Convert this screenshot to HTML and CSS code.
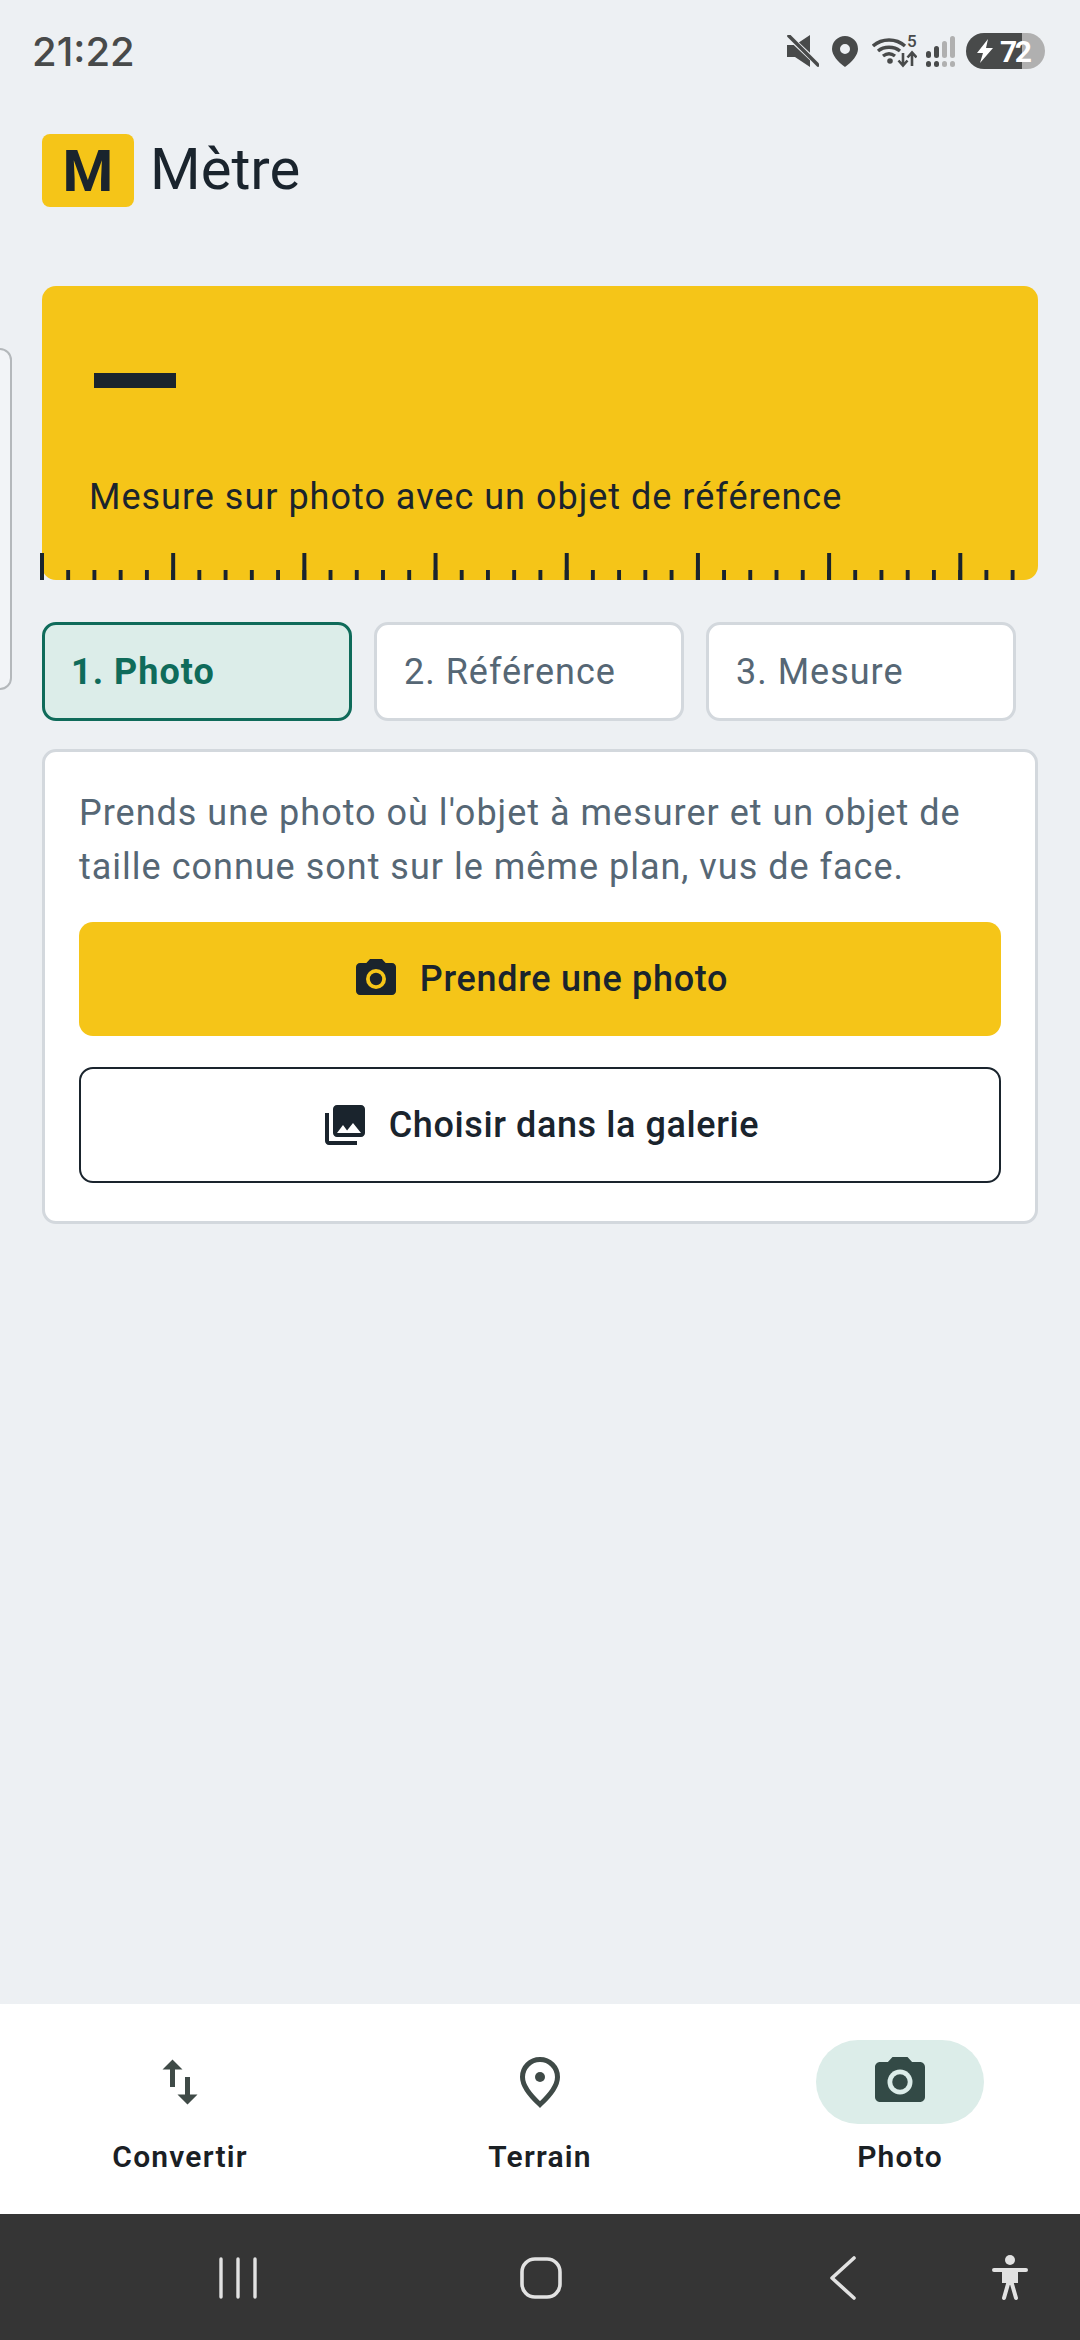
FILE: index.html
```html
<!DOCTYPE html>
<html lang="fr">
<head>
<meta charset="utf-8">
<title>Mètre</title>
<link rel="stylesheet" href="styles.css">
</head>
<body>
<div class="screen">
  <div class="status">
    <span class="time">21:22</span>
    <div class="status-icons">
      <svg class="si-mute" viewBox="0 0 32 32"><path d="M0 10h8L23 0v32L8 22H0z" fill="#484a4a"/><path d="M0 0l32 30" stroke="#edf0f3" stroke-width="5.500"/><path d="M2 1l29 29" stroke="#484a4a" stroke-width="3.600" stroke-linecap="round"/></svg>
      <svg class="si-pin" viewBox="0 0 26 31"><path fill-rule="evenodd" d="M13 0a13 13 0 0 1 13 13c0 6-6 13-13 18C6 26 0 19 0 13A13 13 0 0 1 13 0zm0 8a5 5 0 1 0 0 10a5 5 0 0 0 0-10z" fill="#484a4a"/></svg>
      <svg class="si-wifi" viewBox="0 -5 45 41"><g fill="none" stroke="#484a4a" stroke-width="3.400"><path d="M1 10c9-8 23-8 32 0"/><path d="M6 15c6-5 16-5 22 0"/><path d="M11 20c4-3 8-3 12 0"/></g><circle cx="18" cy="25" r="2.800" fill="#484a4a"/><text x="35" y="11" class="wifi-5">5</text><path d="M31 17v12m-4.500-4.500l4.500 5 4.500-5M40 30V17m-4.500 4.500l4.500-5 4.500 5" fill="none" stroke="#484a4a" stroke-width="2.600"/></svg>
      <svg class="si-sig" viewBox="0 0 29 31"><g fill="#484a4a"><rect x="0" y="15" width="5" height="7" rx="2.500"/><rect x="8" y="10" width="5" height="12" rx="2.500"/><rect x="0" y="25" width="5" height="6" rx="2.500"/><rect x="8" y="25" width="5" height="6" rx="2.500"/></g><g fill="#b0b0b0"><rect x="16" y="5" width="5" height="17" rx="2.500"/><rect x="24" y="0" width="5" height="22" rx="2.500"/><rect x="16" y="25" width="5" height="6" rx="2.500"/><rect x="24" y="25" width="5" height="6" rx="2.500"/></g></svg>
      <div class="battery"><svg class="bolt" viewBox="0 0 16 24"><path d="M11 0L0 14h6l-3 10L16 9H9z" fill="#fff"/></svg><span class="batt-num">72</span></div>
    </div>
  </div>

  <header class="appbar">
    <div class="logo">M</div>
    <h1 class="title">Mètre</h1>
  </header>

  <main class="content">
    <div class="side-sheet"></div>
    <section class="hero">
      <div class="dash"></div>
      <p class="hero-text">Mesure sur photo avec un objet de référence</p>
      <div class="ticks"></div>
    </section>

    <div class="steps">
      <div class="step active">1. Photo</div>
      <div class="step">2. Référence</div>
      <div class="step">3. Mesure</div>
    </div>

    <section class="card">
      <p class="card-text">Prends une photo où l'objet à mesurer et un objet de taille connue sont sur le même plan, vus de face.</p>
      <button class="btn primary">
        <svg class="btn-icon" viewBox="0 0 24 24"><path fill-rule="evenodd" d="M9 2L7.170 4H4C2.900 4 2 4.900 2 6v12c0 1.100.9 2 2 2h16c1.100 0 2-.9 2-2V6c0-1.100-.9-2-2-2h-3.170L15 2H9z" fill="#1a242d"/><circle cx="12" cy="12" r="5" fill="#f5c518"/><circle cx="12" cy="12" r="3.100" fill="#1a242d"/></svg>
        <span class="t1">Prendre une photo</span>
      </button>
      <button class="btn outline">
        <svg class="btn-icon" viewBox="0 0 24 24"><path fill="#1a242d" d="M22 16V4c0-1.100-.9-2-2-2H8c-1.100 0-2 .9-2 2v12c0 1.100.9 2 2 2h12c1.100 0 2-.9 2-2zm-11-4l2.030 2.710L16 11l4 5H8l3-4zM2 6v14c0 1.100.9 2 2 2h14v-2H4V6H2z"/></svg>
        <span class="t2">Choisir dans la galerie</span>
      </button>
    </section>
  </main>

  <nav class="tabbar">
    <div class="tab">
      <div class="tab-pill"><svg class="tab-icon" viewBox="0 0 24 24"><path fill="#3f4a47" d="M16 17.010V10h-2v7.010h-3L15 21l4-3.990h-3zM9 3L5 6.990h3V14h2V6.990h3L9 3z"/></svg></div>
      <span class="tab-label">Convertir</span>
    </div>
    <div class="tab">
      <div class="tab-pill"><svg class="tab-icon" viewBox="0 0 24 24"><path fill="none" stroke="#3f4a47" stroke-width="2" d="M12 3a7 7 0 0 1 7 7c0 4-3.500 7.800-7 11-3.500-3.200-7-7-7-11a7 7 0 0 1 7-7z"/><circle cx="12" cy="10" r="2" fill="#3f4a47"/></svg></div>
      <span class="tab-label">Terrain</span>
    </div>
    <div class="tab">
      <div class="tab-pill on"><svg class="tab-icon" viewBox="0 0 24 24"><path d="M9 2L7.170 4H4C2.900 4 2 4.900 2 6v12c0 1.100.9 2 2 2h16c1.100 0 2-.9 2-2V6c0-1.100-.9-2-2-2h-3.170L15 2H9z" fill="#334a46"/><circle cx="12" cy="12" r="5" fill="#dcede9"/><circle cx="12" cy="12" r="3.100" fill="#334a46"/></svg></div>
      <span class="tab-label">Photo</span>
    </div>
  </nav>

  <div class="sysnav">
    <svg class="sn sn-recent" viewBox="0 0 40 42"><path d="M3 2v38M20 2v38M37 2v38" stroke="#e2e2e2" stroke-width="3.400" stroke-linecap="round"/></svg>
    <svg class="sn sn-home" viewBox="0 0 42 42"><rect x="2" y="2" width="38" height="38" rx="13" fill="none" stroke="#e2e2e2" stroke-width="3.600"/></svg>
    <svg class="sn sn-back" viewBox="0 0 28 44"><path d="M25 2L3 22l22 20" fill="none" stroke="#e2e2e2" stroke-width="3.600" stroke-linecap="round" stroke-linejoin="round"/></svg>
    <svg class="sn sn-a11y" viewBox="0 0 36 46"><circle cx="18" cy="5" r="5" fill="#e2e2e2"/><path d="M2 15h32M18 15v9M18 22l-6 21M18 22l6 21M12 16h12v10H12z" stroke="#e2e2e2" stroke-width="4" stroke-linecap="round" fill="#e2e2e2"/></svg>
  </div>
</div>
</body>
</html>
```
FILE: styles.css
```css
* { box-sizing: border-box; }
html, body { margin: 0; padding: 0; }
body { width: 1080px; height: 2340px; background: #edf0f3; font-family: Roboto, "Liberation Sans", sans-serif; color: #1a242d; overflow: hidden; }
.screen { width: 1080px; height: 2340px; display: flex; flex-direction: column; }

.status { height: 102px; flex: none; display: flex; justify-content: space-between; align-items: center; padding: 0 35px 0 32px; }
.time { font-family: Inter, Roboto, sans-serif; font-size: 40px; font-weight: 500; color: #484a4a; }
.status-icons { display: flex; align-items: center; }
.si-mute { width: 32px; height: 32px; }
.si-pin { width: 26px; height: 31px; margin-left: 13px; }
.si-wifi { width: 45px; height: 41px; margin-left: 14px; }
.wifi-5 { font: 500 17px Roboto, sans-serif; fill: #484a4a; }
.si-sig { width: 29px; height: 31px; margin-left: 9px; }
.battery { width: 79px; height: 36px; margin-left: 11px; border-radius: 18px; display: flex; align-items: center; gap: 7px; padding-left: 11px; background: linear-gradient(90deg, #484a4a 0 71%, #b0b0b0 71% 100%); color: #fff; font-size: 30px; font-weight: 700; }
.batt-num { letter-spacing: -2.5px; }
.bolt { width: 16px; height: 24px; }

.appbar { display: flex; align-items: center; height: 73px; margin-top: 32px; padding-left: 42px; flex: none; }
.logo { width: 92px; height: 73px; background: #f5c518; border-radius: 8px; display: flex; align-items: center; justify-content: center; font-size: 58px; font-weight: 700; color: #1a242d; }
.title { margin: 0 0 3px 16px; font-size: 58px; font-weight: 400; color: #1a242d; }

.content { position: relative; flex: 1; padding: 79px 0 0 42px; display: flex; flex-direction: column; align-items: flex-start; }
.side-sheet { position: absolute; left: -20px; top: 141px; width: 32px; height: 342px; background: #f2f4f7; border: 2px solid #b4b8bb; border-radius: 12px; }
.hero { position: relative; width: 996px; height: 294px; background: #f5c518; border-radius: 14px; padding: 87px 47px 0 47px; }
.dash { width: 82px; height: 15px; background: #1a242d; margin-left: 5px; }
.hero-text { margin: 85px 0 0 0; font-size: 36px; line-height: 48px; letter-spacing: 1px; color: #1a242d; white-space: nowrap; }
.ticks { position: absolute; left: -2px; bottom: 0; width: 976px; height: 27px; background-image: linear-gradient(#1a242d, #1a242d), linear-gradient(90deg, #1a242d 4px, transparent 4px), linear-gradient(90deg, #1a242d 4px, transparent 4px); background-size: 4px 27px, 131.2px 27px, 26.24px 10px; background-position: 0 100%, 0 100%, 0 100%; background-repeat: no-repeat, repeat-x, repeat-x; }

.steps { display: flex; gap: 22px; margin-top: 42px; }
.step { width: 310px; height: 99px; border: 3px solid #d3d8dd; border-radius: 14px; background: #fff; display: flex; align-items: center; padding-left: 27px; font-size: 36px; color: #566775; letter-spacing: 1px; }
.step.active { background: #dcede9; border-color: #0f6b5a; color: #0f6b5a; font-weight: 700; padding-left: 26px; }

.card { width: 996px; margin-top: 28px; background: #fff; border: 3px solid #d3d8dd; border-radius: 14px; padding: 34px 34px 38px; display: flex; flex-direction: column; }
.card-text { margin: 0 0 28px; font-size: 36px; line-height: 54px; color: #566775; letter-spacing: 1px; }
.btn { border-radius: 14px; display: flex; align-items: center; justify-content: center; gap: 20px; font: 500 36px Roboto, sans-serif; color: #1a242d; padding: 0; }
.btn.primary { height: 114px; background: #f5c518; border: none; }
.btn.outline { height: 116px; background: #fff; border: 2px solid #1a242d; margin-top: 31px; }
.t1 { letter-spacing: .7px; }
.t2 { letter-spacing: .6px; }
.btn-icon { width: 48px; height: 48px; }

.tabbar { height: 210px; flex: none; background: #fff; display: grid; grid-template-columns: repeat(3, 360px); justify-items: center; padding-top: 36px; }
.tab { display: flex; flex-direction: column; align-items: center; }
.tab-pill { width: 168px; height: 84px; border-radius: 42px; display: flex; align-items: center; justify-content: center; }
.tab-pill.on { background: #dcede9; }
.tab-icon { width: 60px; height: 60px; }
.tab-label { margin-top: 15px; font-size: 30px; font-weight: 600; color: #1a2024; line-height: 36px; letter-spacing: 1.2px; }

.sysnav { height: 126px; flex: none; background: #353535; position: relative; }
.sn { position: absolute; }
.sn-recent { left: 218px; top: 43px; width: 40px; height: 42px; }
.sn-home { left: 520px; top: 43px; width: 42px; height: 42px; }
.sn-back { left: 829px; top: 42px; width: 28px; height: 44px; }
.sn-a11y { left: 992px; top: 41px; width: 36px; height: 46px; }
```
